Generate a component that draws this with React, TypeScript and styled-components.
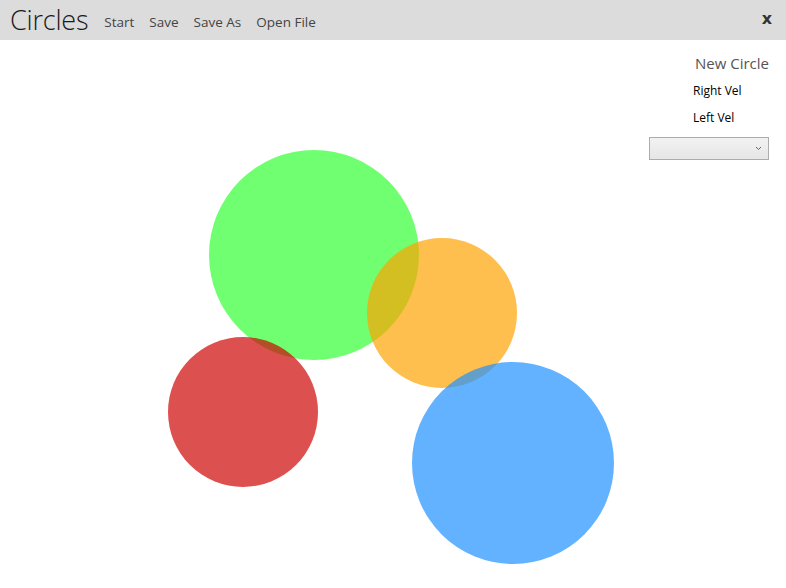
import styled, { createGlobalStyle } from 'styled-components';

const GlobalStyle = createGlobalStyle`
  html, body {
    margin: 0;
    padding: 0;
    background: #ffffff;
    font-family: "Open Sans", "Noto Sans", sans-serif;
  }
`;

const Page = styled.div`
  width: 786px;
  height: 588px;
  display: flex;
  flex-direction: column;
  overflow: hidden;
`;

const TopBar = styled.header`
  height: 40px;
  flex: 0 0 40px;
  background: #dcdcdc;
  display: flex;
  align-items: center;
  padding: 0 14px 0 10px;
  box-sizing: border-box;
`;

const Title = styled.h1`
  margin: 0 16px 0 0;
  font-size: 27px;
  font-weight: 300;
  color: #1a1a1a;
  letter-spacing: -0.2px;
  line-height: 40px;
`;

const Menu = styled.nav`
  display: flex;
  gap: 15px;
  flex: 1;
  padding-top: 3px;
`;

const MenuItem = styled.span`
  font-size: 13.5px;
  color: #444444;
  cursor: pointer;
`;

const CloseButton = styled.span`
  font-family: "DejaVu Sans", sans-serif;
  font-weight: bold;
  font-size: 16px;
  color: #333333;
  cursor: pointer;
  padding-bottom: 4px;
`;

const Body = styled.main`
  flex: 1;
  display: grid;
  grid-template-columns: 1fr 137px;
`;

const Canvas = styled.svg`
  display: block;
  width: 649px;
  height: 548px;
`;

const Panel = styled.aside`
  display: flex;
  flex-direction: column;
  align-items: stretch;
  padding: 13px 17px 0 0;
`;

const PanelTitle = styled.div`
  text-align: right;
  font-size: 15px;
  color: #555555;
  margin-bottom: 7px;
`;

const Label = styled.div`
  font-size: 12px;
  color: #000000;
  padding-left: 44px;
  height: 27px;
  line-height: 22px;
`;

const Select = styled.div`
  margin-top: 3px;
  width: 120px;
  height: 23px;
  box-sizing: border-box;
  border: 1px solid #acacac;
  background: linear-gradient(#f2f2f2, #e6e6e6);
  display: flex;
  align-items: center;
  justify-content: flex-end;
  padding-right: 6px;
  color: #666666;
`;

const circles = [
  { cx: 314, cy: 215, r: 105, fill: '#33ff33' },
  { cx: 442, cy: 273, r: 75, fill: '#ffa403' },
  { cx: 243, cy: 372, r: 75, fill: '#ce0505' },
  { cx: 513, cy: 423, r: 101, fill: '#2092ff' },
];

const App = () => {
  return (
    <Page>
      <GlobalStyle />
      <TopBar>
        <Title>Circles</Title>
        <Menu>
          <MenuItem>Start</MenuItem>
          <MenuItem>Save</MenuItem>
          <MenuItem>Save As</MenuItem>
          <MenuItem>Open File</MenuItem>
        </Menu>
        <CloseButton>x</CloseButton>
      </TopBar>
      <Body>
        <Canvas viewBox="0 0 649 548">
          {circles.map((c, i) => (
            <circle key={i} cx={c.cx} cy={c.cy} r={c.r} fill={c.fill} fillOpacity={0.7} />
          ))}
        </Canvas>
        <Panel>
          <PanelTitle>New Circle</PanelTitle>
          <Label>Right Vel</Label>
          <Label>Left Vel</Label>
          <Select>
            <svg width="7" height="5" viewBox="0 0 7 5">
              <path d="M1 1 L3.5 3.5 L6 1" stroke="#666" strokeWidth="1" fill="none" />
            </svg>
          </Select>
        </Panel>
      </Body>
    </Page>
  );
};

export default App;
